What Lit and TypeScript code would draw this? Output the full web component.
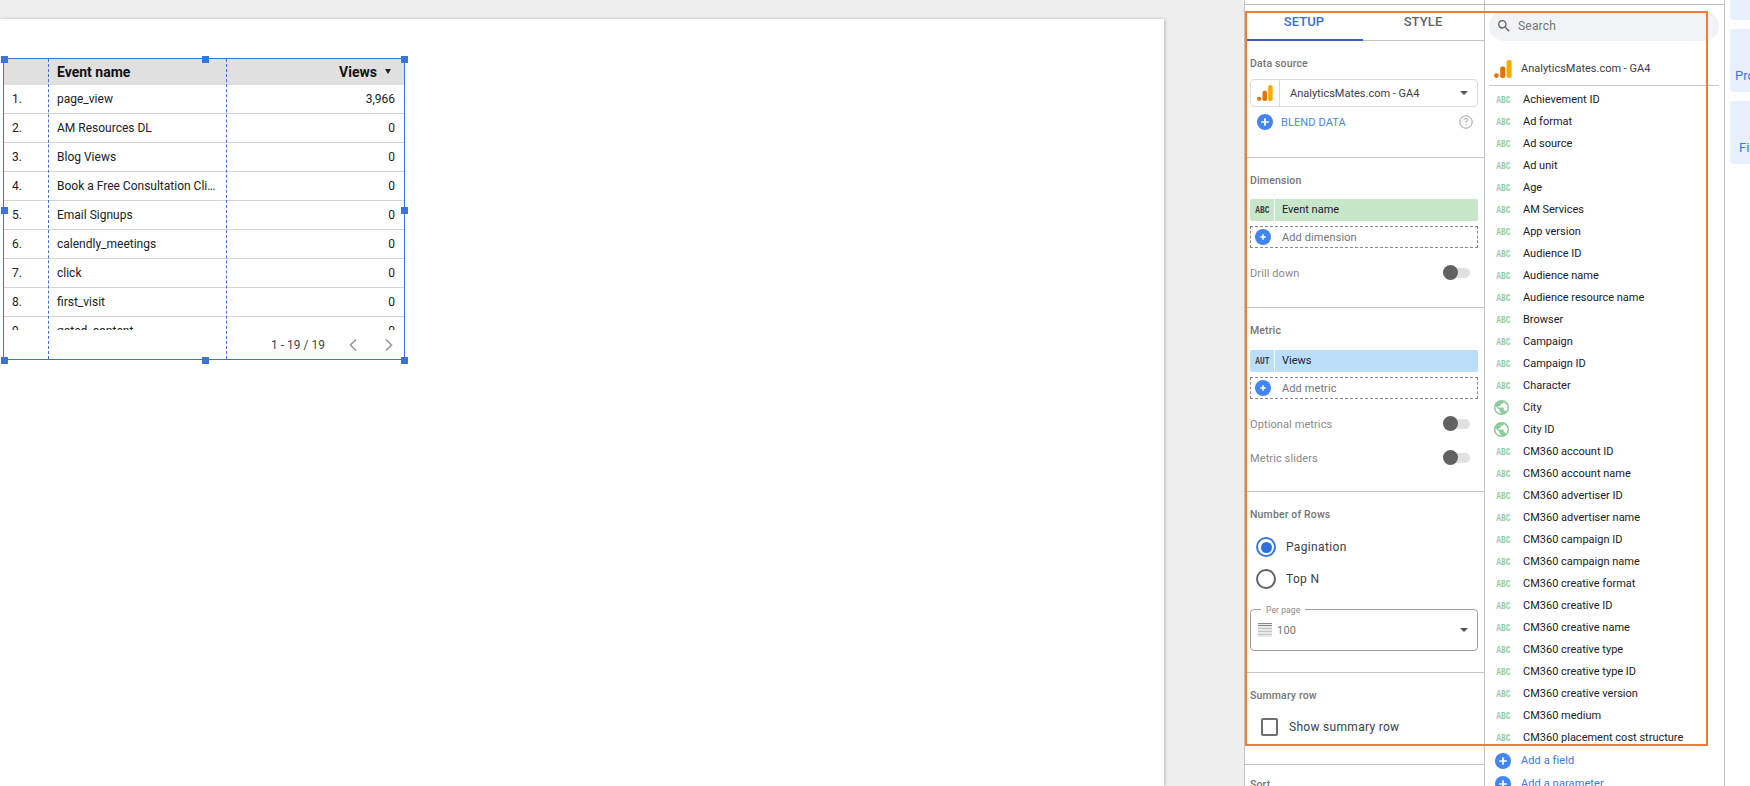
import { LitElement, html, css, svg } from "lit";
import { customElement } from "lit/decorators.js";

const rows: [string, string, string][] = [
  ["1.", "page_view", "3,966"],
  ["2.", "AM Resources DL", "0"],
  ["3.", "Blog Views", "0"],
  ["4.", "Book a Free Consultation Click", "0"],
  ["5.", "Email Signups", "0"],
  ["6.", "calendly_meetings", "0"],
  ["7.", "click", "0"],
  ["8.", "first_visit", "0"],
  ["9.", "gated_content", "0"],
];

const fields = [
  "Achievement ID", "Ad format", "Ad source", "Ad unit", "Age", "AM Services", "App version",
  "Audience ID", "Audience name", "Audience resource name", "Browser", "Campaign", "Campaign ID",
  "Character", "City", "City ID", "CM360 account ID", "CM360 account name", "CM360 advertiser ID",
  "CM360 advertiser name", "CM360 campaign ID", "CM360 campaign name", "CM360 creative format",
  "CM360 creative ID", "CM360 creative name", "CM360 creative type", "CM360 creative type ID",
  "CM360 creative version", "CM360 medium", "CM360 placement cost structure",
];

const gaLogo = (size: number) => svg`<svg width=${size} height=${size} viewBox="0 0 18 18">
  <rect x="12.6" y="0" width="5" height="18" rx="2" fill="#f9ab00"/>
  <rect x="6.2" y="6.5" width="5" height="11.5" rx="2" fill="#e37400"/>
  <circle cx="2.4" cy="15.6" r="2.4" fill="#e37400"/></svg>`;

const plus = (size: number) => svg`<svg width=${size} height=${size} viewBox="0 0 16 16">
  <circle cx="8" cy="8" r="8" fill="#4285f4"/>
  <path d="M8 4.2v7.6M4.2 8h7.6" stroke="#fff" stroke-width="1.7"/></svg>`;

const plusSmall = () => svg`<svg width="16" height="16" viewBox="0 0 16 16">
  <circle cx="8" cy="8" r="8" fill="#4285f4"/>
  <path d="M8 5.2v5.6M5.2 8h5.6" stroke="#fff" stroke-width="1.5"/></svg>`;

const globe = svg`<svg width="15" height="15" viewBox="2 2 20 20"><path fill="#8fcb9b" d="M12 2C6.48 2 2 6.48 2 12s4.48 10 10 10 10-4.48 10-10S17.52 2 12 2zm-1 17.93c-3.95-.49-7-3.85-7-7.93 0-.62.08-1.21.21-1.79L9 15v1c0 1.1.9 2 2 2v1.93zm6.9-2.54c-.26-.81-1-1.39-1.9-1.39h-1v-3c0-.55-.45-1-1-1H8v-2h2c.55 0 1-.45 1-1V7h2c1.1 0 2-.9 2-2v-.41c2.93 1.19 5 4.06 5 7.41 0 2.08-.8 3.97-2.1 5.39z"/></svg>`;

@customElement("app-root")
export class AppRoot extends LitElement {
  static styles = css`
    :host { display: block; width: 1750px; height: 786px; overflow: hidden; position: relative; background: #eeeeee;
      font-family: Roboto, "Liberation Sans", sans-serif; color: #202124; }
    .shell { display: flex; height: 786px; }

    .canvas { width: 1244px; flex: none; padding-top: 19px; box-sizing: border-box; }
    .page { width: 1164px; height: 767px; background: #fff; box-shadow: 1px 0 3px rgba(0,0,0,.22); padding: 40px 0 0 4px; box-sizing: border-box; }
    .table { position: relative; width: 400px; height: 300px; outline: 1px solid #3a74d6; font-size: 12px; color: #212121; display: flex; flex-direction: column; }
    .thead { display: grid; grid-template-columns: 44px 178px 178px; height: 26px; background: #e0e0e0; flex: none;
      font-size: 14px; font-weight: 700; align-items: center; color: #111; }
    .tbody { height: 245px; overflow: hidden; flex: none; }
    .row { display: grid; grid-template-columns: 44px 178px 178px; height: 29px; box-sizing: border-box; border-bottom: 1px solid #d4d4d4; align-items: center; }
    .num { padding-left: 8px; }
    .name { padding-left: 9px; padding-right: 9px; white-space: nowrap; overflow: hidden; text-overflow: ellipsis; }
    .val { text-align: right; padding-right: 9px; }
    .thead .val { padding-right: 12px; }
    .sort { display: inline-block; width: 0; height: 0; border: 3.5px solid transparent; border-top: 5px solid #222; border-bottom: 0; margin: 0 1px 3px 8px; vertical-align: middle; }
    .tfoot { display: flex; align-items: center; justify-content: flex-end; height: 29px; color: #444; gap: 0; }
    .pager { margin-right: 23px; }
    .chev { display: block; margin-right: 26px; }
    .chev:last-child { margin-right: 10px; }
    .dash { position: absolute; top: 0; bottom: 0; border-left: 1px dashed #3a74d6; }
    .h { position: absolute; width: 7px; height: 7px; background: #3a74d6; }

    .panel { width: 240px; flex: none; box-sizing: border-box; background: #fff; border-left: 1px solid #c4c4c4; margin-top: 0; height: 786px; }
    .topgap { height: 4px; border-bottom: 1px solid #bdbdbd; box-sizing: content-box; }
    .tabs { display: flex; height: 36px; box-sizing: border-box; border-bottom: 1px solid #c4c4c4; padding-top: 9px; font-size: 13px; font-weight: 500; letter-spacing: .1px; }
    .tab { width: 118px; margin-left: 1px; text-align: center; color: #5f6368; box-sizing: border-box; line-height: 16px; }
    .tab.on { color: #3b6fcb; border-bottom: 2px solid #3b62b0; height: 27px; margin-left: 0; }
    .sec { box-sizing: border-box; border-bottom: 1px solid #c8c8c8; padding: 0 5px; position: relative; }
    .lbl { font-size: 10.5px; font-weight: 500; color: #757575; line-height: 14px; letter-spacing: .15px; }
    .src { display: flex; height: 28px; margin-top: 8px; border: 1px solid #dadada; border-radius: 4px; box-sizing: border-box; align-items: center; font-size: 11px; color: #3c4043; width: 228px; }
    .srcico { width: 29px; height: 100%; box-sizing: border-box; border-right: 1px solid #dadada; display: flex; align-items: center; justify-content: center; flex: none; }
    .srctxt { flex: 1; padding-left: 10px; }
    .caret { width: 0; height: 0; border: 4px solid transparent; border-top: 4.5px solid #555; border-bottom: 0; margin-right: 9px; }
    .blend { display: flex; align-items: center; height: 16px; margin-top: 7px; padding-left: 7px; color: #4a86e8; font-size: 11px; letter-spacing: .1px; }
    .blend span { flex: 1; padding-left: 8px; }
    .help { margin-right: 6px; display: block; }
    .chip { display: flex; height: 22px; width: 228px; border-radius: 2px; font-size: 11px; align-items: center; box-sizing: border-box; }
    .chip.green { background: #c8e6c9; margin-top: 11px; }
    .chip.blue { background: #bbdefb; margin-top: 12px; }
    .chip i { font: 700 10.5px "Liberation Mono", monospace; width: 25px; height: 100%; border-right: 1px solid #fff; display: flex; align-items: center; justify-content: center; box-sizing: border-box; color: #37474f; flex: none; }
    .chip i em { font-style: normal; display: block; transform: scaleX(.75); }
    .chip span { padding-left: 7px; color: #202124; padding-bottom: 2px; }
    .add { display: flex; align-items: center; height: 22px; width: 228px; box-sizing: border-box; border: 1px dashed #8a8a8a; margin-top: 5px; font-size: 11px; color: #757575; padding-left: 4px; letter-spacing: .1px; }
    .add span { padding-left: 11px; }
    .toggle { display: flex; align-items: center; justify-content: space-between; font-size: 11px; color: #8a8a8a; letter-spacing: .1px; height: 18px; width: 220px; margin-top: 16px; }
    .sw { position: relative; width: 27px; height: 10px; border-radius: 5px; background: #e0e0e0; }
    .sw::before { content: ""; position: absolute; left: 0; top: -3px; width: 15px; height: 15px; border-radius: 50%; background: #616161; }
    .radio { display: flex; align-items: center; font-size: 12px; letter-spacing: .35px; color: #3c4043; height: 20px; padding-left: 6px; }
    .radio span { padding-left: 10px; }
    .rd { width: 20px; height: 20px; flex: none; box-sizing: border-box; border: 2px solid #5f6368; border-radius: 50%; }
    .rd.on { border-color: #3b78e7; display: flex; align-items: center; justify-content: center; }
    .rd.on::after { content: ""; width: 11px; height: 11px; border-radius: 50%; background: #2f6fe0; }
    .field { position: relative; width: 228px; height: 42px; box-sizing: border-box; border: 1px solid #9e9e9e; border-radius: 4px; margin-top: 20px; display: flex; align-items: center; padding-left: 7px; font-size: 11px; color: #757575; }
    .legend { position: absolute; left: 10px; top: -5px; padding: 0 5px; background: #fff; font-size: 8.5px; color: #8a8a8a; line-height: 10px; letter-spacing: .1px; }
    .field span { flex: 1; padding-left: 5px; letter-spacing: .2px; }
    .check { display: flex; align-items: center; font-size: 12px; letter-spacing: .3px; color: #3c4043; padding-left: 11px; margin-top: 15px; height: 18px; }
    .cb { width: 17px; height: 18px; box-sizing: border-box; border: 2px solid #6e6e6e; border-radius: 2px; margin-right: 11px; flex: none; }

    .search { margin: 6px 5px 0 4px; height: 30px; border-radius: 15px; background: #f1f3f4; display: flex; align-items: center; padding-left: 7px; font-size: 12px; color: #70757a; gap: 6px; letter-spacing: .2px; }
    .dshead { height: 45px; margin: 0 5px 0 4px; box-sizing: border-box; border-bottom: 1px solid #c8c8c8; display: flex; align-items: center; padding: 11px 0 0 5px; font-size: 11px; color: #3c4043; gap: 9px; }
    .list { height: 663px; overflow: hidden; padding-left: 8px; padding-top: 2px; box-sizing: border-box; }
    .item { height: 22px; display: flex; align-items: center; font-size: 11px; color: #202124; }
    .ico { width: 16px; margin-right: 14px; display: flex; justify-content: center; flex: none; }
    .abc { font: 700 10.5px "Liberation Mono", monospace; color: #96d09f; transform: scaleX(.75); display: block; margin: 2px 0 0 5px; line-height: 12px; }
    .link { display: flex; align-items: center; height: 23px; padding-left: 10px; gap: 10px; font-size: 11px; color: #3b78e7; letter-spacing: .1px; }

    .rail { flex: 1; background: #fff; border-left: 1px solid #c4c4c4; padding-left: 5px; display: flex; flex-direction: column; gap: 9px; margin-top: -4px; height: 790px; overflow: hidden; font-size: 13px; color: #3b78e7; }
    .card { background: #e8f0fe; border-radius: 4px 0 0 4px; height: 63px; flex: none; display: flex; align-items: flex-end; overflow: hidden; white-space: nowrap; padding-bottom: 9px; box-sizing: border-box; }
    .card.a { height: 24px; padding: 0; }
    .card.p { padding-left: 5px; }
    .card.f { padding-left: 9px; }

    .mark { position: absolute; left: 1245px; top: 11px; width: 463px; height: 735px; box-sizing: border-box; border: 2px solid #ee7a3b; pointer-events: none; }
  `;

  private handle(x: number, y: number) {
    return html`<div class="h" style="left:${x}px;top:${y}px"></div>`;
  }

  render() {
    return html`<div class="shell">
      <div class="canvas"><div class="page">
        <div class="table">
          <div class="thead"><div></div><div class="name">Event name</div><div class="val">Views<span class="sort"></span></div></div>
          <div class="tbody">${rows.map(r => html`<div class="row"><div class="num">${r[0]}</div><div class="name">${r[1]}</div><div class="val">${r[2]}</div></div>`)}</div>
          <div class="tfoot">
            <span class="pager">1 - 19 / 19</span>
            <svg class="chev" width="10" height="14" viewBox="0 0 10 14"><path d="M8 1.5 2.5 7 8 12.5" fill="none" stroke="#9a9a9a" stroke-width="1.6"/></svg>
            <svg class="chev" width="10" height="14" viewBox="0 0 10 14"><path d="M2 1.5 7.5 7 2 12.5" fill="none" stroke="#9a9a9a" stroke-width="1.6"/></svg>
          </div>
          <div class="dash" style="left:44px"></div>
          <div class="dash" style="left:222px"></div>
          ${[[-3,-3],[198,-3],[397,-3],[-3,148],[397,148],[-3,298],[198,298],[397,298]].map(p => this.handle(p[0], p[1]))}
        </div>
      </div></div>

      <div class="panel">
        <div class="topgap"></div>
        <div class="tabs"><div class="tab on">SETUP</div><div class="tab">STYLE</div></div>
        <div class="sec" style="height:117px;padding-top:16px">
          <div class="lbl">Data source</div>
          <div class="src"><div class="srcico">${gaLogo(16)}</div><div class="srctxt">AnalyticsMates.com - GA4</div><div class="caret"></div></div>
          <div class="blend">${plus(16)}<span>BLEND DATA</span>
            <svg class="help" width="14" height="14" viewBox="0 0 14 14"><circle cx="7" cy="7" r="6.2" fill="none" stroke="#9e9e9e" stroke-width="1"/><text x="7" y="10.4" font-size="9.5" text-anchor="middle" fill="#9e9e9e" font-family="Roboto">?</text></svg>
          </div>
        </div>
        <div class="sec" style="height:150px;padding-top:16px">
          <div class="lbl">Dimension</div>
          <div class="chip green"><i><em>ABC</em></i><span>Event name</span></div>
          <div class="add">${plusSmall()}<span>Add dimension</span></div>
          <div class="toggle">Drill down<div class="sw"></div></div>
        </div>
        <div class="sec" style="height:184px;padding-top:16px">
          <div class="lbl">Metric</div>
          <div class="chip blue"><i><em>AUT</em></i><span>Views</span></div>
          <div class="add">${plusSmall()}<span>Add metric</span></div>
          <div class="toggle">Optional metrics<div class="sw"></div></div>
          <div class="toggle">Metric sliders<div class="sw"></div></div>
        </div>
        <div class="sec" style="height:181px;padding-top:16px">
          <div class="lbl">Number of Rows</div>
          <div class="radio" style="margin-top:15px"><div class="rd on"></div><span>Pagination</span></div>
          <div class="radio" style="margin-top:12px"><div class="rd"></div><span>Top N</span></div>
          <div class="field"><div class="legend">Per page</div>
            <svg width="14" height="14" viewBox="0 0 14 14"><rect width="14" height="14" fill="#e8e8e8"/><path d="M0 .5h14M0 2.5h14" stroke="#8a8a8a" stroke-width="1"/><path d="M0 5.5h14M0 8.5h14M0 11.5h14" stroke="#c4c4c4" stroke-width="1"/></svg>
            <span>100</span><div class="caret"></div></div>
        </div>
        <div class="sec" style="height:92px;padding-top:16px">
          <div class="lbl">Summary row</div>
          <div class="check"><div class="cb"></div>Show summary row</div>
        </div>
        <div class="sec" style="border:0;padding-top:13px"><div class="lbl">Sort</div></div>
      </div>

      <div class="panel">
        <div class="topgap"></div>
        <div class="search">
          <svg width="16" height="16" viewBox="0 0 24 24"><path fill="#5f6368" d="M15.5 14h-.79l-.28-.27A6.47 6.47 0 0 0 16 9.5 6.5 6.5 0 1 0 9.5 16c1.61 0 3.09-.59 4.23-1.57l.27.28v.79l5 4.99L20.49 19l-4.99-5zm-6 0C7.01 14 5 11.99 5 9.5S7.01 5 9.5 5 14 7.01 14 9.5 11.99 14 9.5 14z"/></svg>
          Search
        </div>
        <div class="dshead">${gaLogo(18)}<span>AnalyticsMates.com - GA4</span></div>
        <div class="list">${fields.map((f, i) => html`<div class="item"><div class="ico">${i === 14 || i === 15 ? globe : html`<span class="abc">ABC</span>`}</div>${f}</div>`)}</div>
        <div class="link">${plus(16)}Add a field</div>
        <div class="link">${plus(16)}Add a parameter</div>
      </div>

      <div class="rail">
        <div class="card a"></div>
        <div class="card p">Properties</div>
        <div class="card f">Filter bar</div>
      </div>
    </div>
    <div class="mark"></div>`;
  }
}
